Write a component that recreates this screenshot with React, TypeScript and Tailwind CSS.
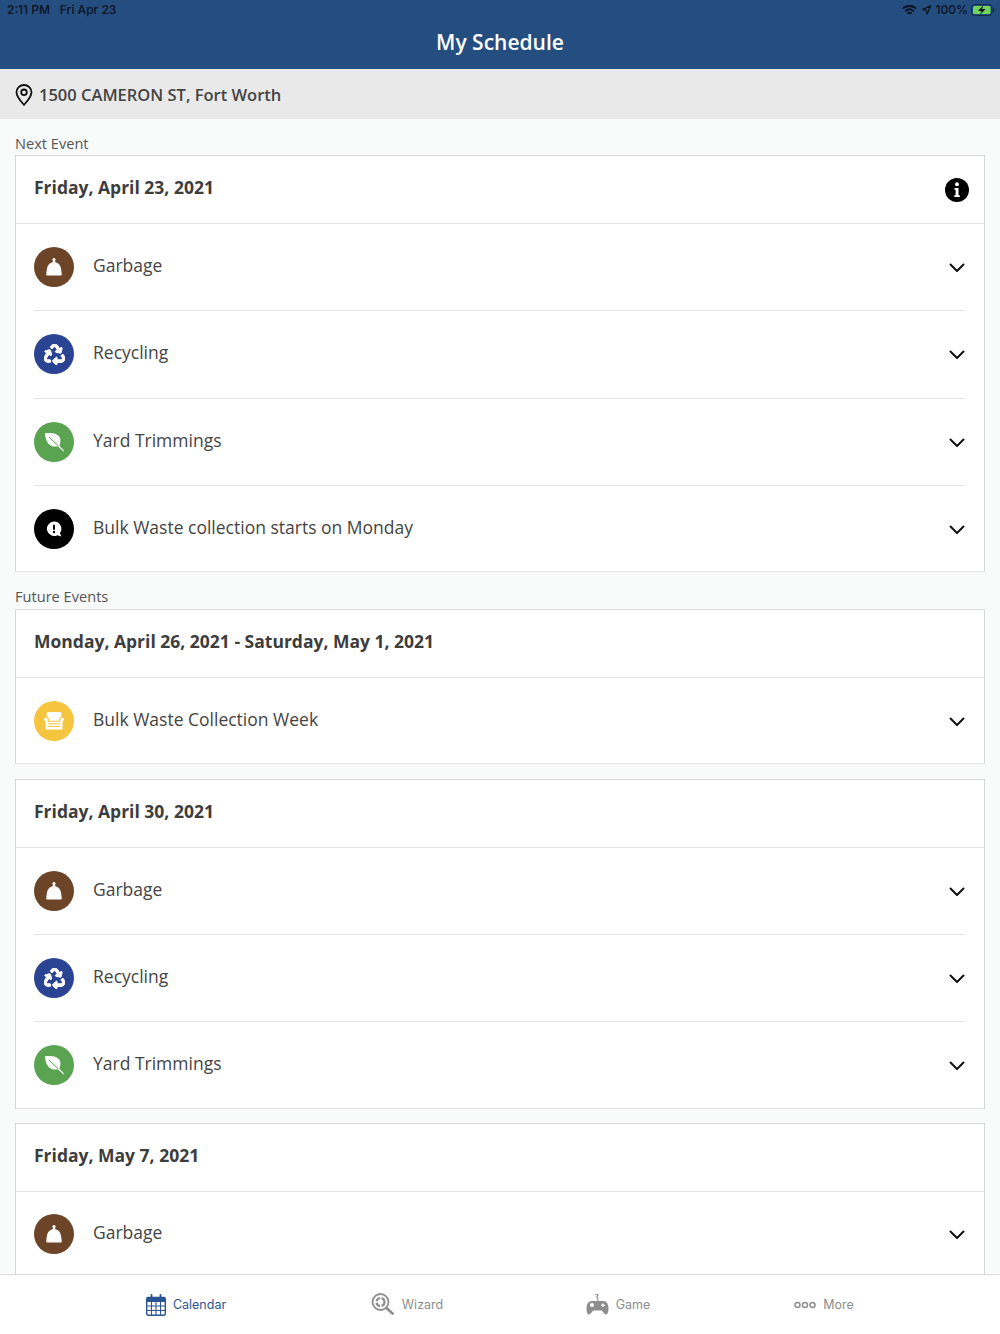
import React from "react";
import { FaRecycle } from "react-icons/fa";

const Chevron = () => (
  <svg width="16" height="10" viewBox="0 0 16 10" fill="none" className="shrink-0">
    <path d="M1.500 1.500 8 8l6.500-6.500" stroke="#111" strokeWidth="2" strokeLinecap="round" strokeLinejoin="round" />
  </svg>
);

const GarbageIcon = () => (
  <svg width="20" height="20" viewBox="0 0 20 20" fill="#fff">
    <circle cx="10" cy="2.600" r="1.600" />
    <path d="M9.100 3h1.800l.4 2.300c3.300.6 5.300 3.300 5.800 6.700l.7 5.600c0 .5-.3.900-.9.900H3.100c-.6 0-.9-.4-.9-.9l.7-5.600c.5-3.400 2.500-6.100 5.800-6.700z" />
  </svg>
);

const LeafIcon = () => (
  <svg width="24" height="24" viewBox="0 0 24 24">
    <path d="M2.800 3.200c6.500-.9 12.800 0 15 4.300 1.200 2.400.7 5.300-.4 8.400-4.500 1.400-8.900.7-11.200-2.400C4.300 11 3.300 7.300 2.800 3.200z" fill="#fff" />
    <path d="M7 7l9.500 9" stroke="#5aa451" strokeWidth="1" fill="none" />
    <path d="M16.800 16.300l4.700 4.300" stroke="#fff" strokeWidth="1.200" fill="none" strokeLinecap="round" />
  </svg>
);

const AlertIcon = () => (
  <svg width="18" height="18" viewBox="0 0 18 18">
    <path d="M9 1.600a7.200 7.200 0 1 0 3.400 13.600l3.900 1.400-1.300-3.600A7.200 7.200 0 0 0 9 1.600z" fill="#fff" />
    <rect x="8" y="4.600" width="2" height="5.400" rx="1" fill="#000" />
    <circle cx="9" cy="12" r="1.200" fill="#000" />
  </svg>
);

const ChairIcon = () => (
  <svg width="22" height="22" viewBox="0 0 22 22" fill="#fff">
    <path d="M5 2h12c.8 0 1.300.5 1.300 1.300v3.600c-1.400.2-2.200 1.100-2.200 2.400v1.500H5.900V9.300c0-1.300-.8-2.200-2.200-2.400V3.300C3.700 2.500 4.200 2 5 2z" />
    <path d="M1 9.200c0-.9.800-1.500 1.700-1.500s2 .7 2 1.800v2.300h12.600V9.500c0-1.100 1.100-1.800 2-1.800S21 8.300 21 9.200c0 1-.8 1.700-1.500 2v7.300c0 .6-.4 1-1 1h-15c-.6 0-1-.4-1-1v-7.300C1.800 10.900 1 10.200 1 9.200z" />
    <rect x="4.700" y="13.300" width="12.600" height="1" fill="#f6c53f" />
    <rect x="4.700" y="16" width="12.600" height="1" fill="#f6c53f" />
  </svg>
);

type Kind = "garbage" | "recycling" | "yard" | "alert" | "bulk";

const kinds: Record<Kind, { bg: string; icon: React.ReactNode }> = {
  garbage: { bg: "bg-[#6c4428]", icon: <GarbageIcon /> },
  recycling: { bg: "bg-[#2a4392]", icon: <FaRecycle size={21} color="#fff" stroke="#fff" strokeWidth={24} /> },
  yard: { bg: "bg-[#5aa451]", icon: <LeafIcon /> },
  alert: { bg: "bg-black", icon: <AlertIcon /> },
  bulk: { bg: "bg-[#f6c53f]", icon: <ChairIcon /> },
};

const Row = ({ kind, label, last }: { kind: Kind; label: string; last?: boolean }) => (
  <div className={`shrink-0 flex items-center ${last ? "h-[85.33px]" : "h-[87.33px] border-b border-[#e4e4e4]"}`}>
    <div className={`w-10 h-10 rounded-full flex items-center justify-center shrink-0 ${kinds[kind].bg}`}>
      {kinds[kind].icon}
    </div>
    <span className="ml-[19px] flex-1 text-[17.500px] leading-[24px] text-[#444] -mt-[4px]">{label}</span>
    <div className="w-4 flex justify-end mt-[2px]">
      <Chevron />
    </div>
  </div>
);

const Card = ({
  date,
  info,
  rows,
  className = "",
}: {
  date: string;
  info?: boolean;
  rows: { kind: Kind; label: string }[];
  className?: string;
}) => (
  <div className={`mx-[15px] bg-white border border-[#d9d9d9] border-b-[#e4e4e4] shrink-0 ${className}`}>
    <div className="h-[68px] border-b border-[#e4e4e4] pl-[18px] pr-[15px] flex items-center justify-between">
      <span className="text-[17.500px] leading-[24px] font-bold text-[#3d3d3d] -mt-[5px]">{date}</span>
      {info && (
        <svg width="24" height="24" viewBox="0 0 24 24">
          <circle cx="12" cy="12" r="12" fill="#000" />
          <circle cx="12" cy="6.300" r="2" fill="#fff" />
          <path d="M9.500 10h4v7.200h1.300v1.800H9.300v-1.800h1.300v-5.400H9.500z" fill="#fff" />
        </svg>
      )}
    </div>
    <div className="pl-[18px] pr-[19px]">
      {rows.map((r, i) => (
        <Row key={i} {...r} last={i === rows.length - 1} />
      ))}
    </div>
  </div>
);

const SectionLabel = ({ children, className = "" }: { children: React.ReactNode; className?: string }) => (
  <div className={`px-[15px] text-[14.600px] leading-[20px] text-[#555] shrink-0 ${className}`}>{children}</div>
);

const tabFont = { fontFamily: "Inter, 'Liberation Sans', sans-serif" };

const Tab = ({
  icon,
  label,
  active,
  width,
}: {
  icon: React.ReactNode;
  label: string;
  active?: boolean;
  width: string;
}) => (
  <div className={`flex items-center justify-center gap-[7px] ${width}`}>
    {icon}
    <span style={tabFont} className={`text-[12.500px] leading-[16px] ${active ? "text-[#2a5590]" : "text-[#8e8e8e]"}`}>
      {label}
    </span>
  </div>
);

export default function App() {
  return (
    <div className="w-[1000px] h-[1334px] overflow-hidden flex flex-col bg-[#f9fafa] font-['Open_Sans',sans-serif]">
      <header className="h-[69px] shrink-0 bg-[#254e80] relative flex items-center justify-center">
        <span className="text-white text-[21px] leading-[28px] font-semibold mt-[14px]">My Schedule</span>
        <div
          style={tabFont}
          className="absolute inset-x-0 top-0 h-[20px] pl-[7px] pr-[5px] flex items-center justify-between text-[12px] font-medium text-[#08111f]"
        >
          <span className="flex gap-[10px]">
            <span>2:11 PM</span>
            <span>Fri Apr 23</span>
          </span>
          <span className="flex items-center gap-[3px]">
            <svg width="15" height="12" viewBox="0 0 16 12" fill="none" stroke="#08111f" strokeWidth="2" strokeLinecap="round">
              <path d="M1.500 4C5 1 11 1 14.500 4" />
              <path d="M4 6.800c2.400-2 5.600-2 8 0" />
              <path d="M6.400 9.500c1-.8 2.200-.8 3.200 0" />
            </svg>
            <svg width="11" height="12" viewBox="0 0 12 12" fill="none" stroke="#08111f" strokeWidth="1.300" strokeLinejoin="round" className="ml-[1px]">
              <path d="M10.500 1.500 1.500 5.500l4.300.8.900 4.200z" />
            </svg>
            <span className="ml-[1px]">100%</span>
            <svg width="24" height="12" viewBox="0 0 24 12">
              <rect x="0.500" y="0.500" width="20.500" height="11" rx="3" fill="none" stroke="#08111f" strokeOpacity="0.600" />
              <rect x="2" y="2" width="17.500" height="8" rx="1.500" fill="#6fd35c" />
              <rect x="22" y="4" width="1.300" height="4" rx="0.600" fill="#08111f" fillOpacity="0.600" />
              <path d="M12.500 1 7 7h3.500L9 11l5.500-6H11z" fill="#08111f" />
            </svg>
          </span>
        </div>
      </header>

      <div className="h-[50px] shrink-0 bg-[#e9e9e9] flex items-center pl-[15px]">
        <svg width="18" height="22" viewBox="0 0 18 22" fill="none" stroke="#111" strokeWidth="1.800" className="mt-[2px]">
          <path d="M9 1C4.800 1 1.500 4.200 1.500 8.300c0 4.700 4.500 9.200 7.500 12.500 3-3.300 7.500-7.800 7.500-12.500C16.500 4.200 13.200 1 9 1z" strokeLinejoin="round" />
          <circle cx="9" cy="8.300" r="2.800" />
        </svg>
        <span className="ml-[6px] text-[16.500px] leading-[24px] font-semibold text-[#444] mt-[2px]">
          1500 CAMERON ST, Fort Worth
        </span>
      </div>

      <div className="flex-1 min-h-0 overflow-hidden flex flex-col">
        <SectionLabel className="mt-[14px] mb-[2px]">Next Event</SectionLabel>
        <Card
          date="Friday, April 23, 2021"
          info
          rows={[
            { kind: "garbage", label: "Garbage" },
            { kind: "recycling", label: "Recycling" },
            { kind: "yard", label: "Yard Trimmings" },
            { kind: "alert", label: "Bulk Waste collection starts on Monday" },
          ]}
        />
        <SectionLabel className="mt-[14px] mb-[2.700px]">Future Events</SectionLabel>
        <Card date="Monday, April 26, 2021 - Saturday, May 1, 2021" rows={[{ kind: "bulk", label: "Bulk Waste Collection Week" }]} />
        <Card
          className="mt-[14.500px]"
          date="Friday, April 30, 2021"
          rows={[
            { kind: "garbage", label: "Garbage" },
            { kind: "recycling", label: "Recycling" },
            { kind: "yard", label: "Yard Trimmings" },
          ]}
        />
        <Card className="mt-[14px]" date="Friday, May 7, 2021" rows={[{ kind: "garbage", label: "Garbage" }]} />
      </div>

      <nav className="h-[60px] shrink-0 bg-white border-t border-[#dcdcdc] flex items-center pl-[72px]">
        <Tab
          width="w-[228px]"
          active
          label="Calendar"
          icon={
            <svg width="20" height="22" viewBox="0 0 20 22" fill="none">
              <rect x="0.700" y="3.500" width="18.600" height="17.800" rx="1.500" stroke="#2a5590" strokeWidth="1.400" />
              <rect x="0.700" y="3.500" width="18.600" height="4.500" fill="#2a5590" />
              <path d="M5.500 1v4M14.500 1v4" stroke="#2a5590" strokeWidth="1.800" strokeLinecap="round" />
              <path d="M1 12h18M1 16.500h18M5.500 8v13M10 8v13M14.500 8v13" stroke="#2a5590" strokeWidth="1.100" />
            </svg>
          }
        />
        <Tab
          width="w-[214px]"
          label="Wizard"
          icon={
            <svg width="24" height="22" viewBox="0 0 24 22" fill="none" className="-mt-[2px]">
              <circle cx="9.500" cy="9" r="8" stroke="#8e8e8e" strokeWidth="1.800" />
              <circle cx="9.500" cy="9" r="4" stroke="#8e8e8e" strokeWidth="2.200" strokeDasharray="5 1.500" />
              <path d="M15.500 15l6 5.500" stroke="#8e8e8e" strokeWidth="2.800" strokeLinecap="round" />
            </svg>
          }
        />
        <Tab
          width="w-[208px]"
          label="Game"
          icon={
            <svg width="23" height="23" viewBox="0 0 23 23" fill="none" className="-mt-[1px]">
              <path d="M10 1.500c1.500-.5 2.500.5 1.700 1.500-.8.8-1.500 1.200-.2 2.200.5.400.4 1.300.4 2.300" stroke="#8e8e8e" strokeWidth="1.200" strokeLinecap="round" />
              <path d="M5.500 8h12c3 0 5 3 5 7.500 0 3.500-1 6-2.500 6-2 0-2.500-3-4.500-4h-8c-2 1-2.500 4-4.500 4-1.500 0-2.500-2.500-2.500-6C.5 11 2.500 8 5.500 8z" fill="#8e8e8e" />
              <circle cx="6" cy="12" r="2" fill="#fff" />
              <path d="M17 10.500v3.500M15.200 12.200h3.600" stroke="#fff" strokeWidth="1.200" />
            </svg>
          }
        />
        <Tab
          width="w-[204px]"
          label="More"
          icon={
            <svg width="22" height="8" viewBox="0 0 22 8" fill="none" stroke="#8e8e8e" strokeWidth="1.500">
              <circle cx="3.500" cy="4" r="2.500" />
              <circle cx="11" cy="4" r="2.500" />
              <circle cx="18.500" cy="4" r="2.500" />
            </svg>
          }
        />
      </nav>
    </div>
  );
}
